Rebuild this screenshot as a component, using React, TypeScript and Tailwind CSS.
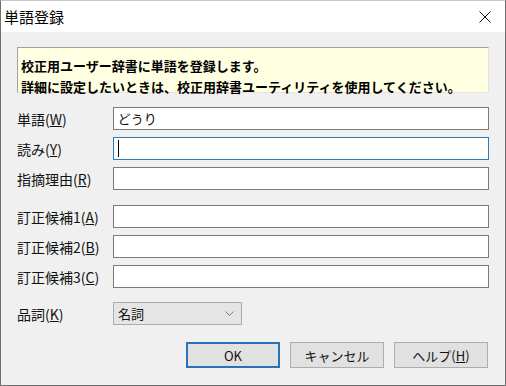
import React from 'react'

const font = 'font-["Noto_Sans_CJK_JP","Noto_Sans",sans-serif]'

function Field({ label, k, value, focused }: { label: string; k: string; value?: string; focused?: boolean }) {
  return (
    <div className="flex items-center h-[23px]">
      <div className="w-[96px] text-[14px] leading-none text-[#111]">
        {label}(<span className="underline">{k}</span>)
      </div>
      <div
        className={`relative flex items-center w-[377px] h-[23px] bg-white border ${focused ? 'border-[#2b7bb9]' : 'border-[#7a7a7a]'} pl-[4px] text-[13px] leading-none text-[#111]`}
      >
        {value}
        {focused && <div className="w-px h-[17px] bg-black" />}
      </div>
    </div>
  )
}

function Btn({ children, primary }: { children: React.ReactNode; primary?: boolean }) {
  return (
    <div
      className={`w-[94px] h-[26px] flex items-center justify-center bg-[#e1e1e1] text-[13px] leading-none text-[#111] ${primary ? 'border-2 border-[#2a72b5]' : 'border border-[#adadad]'}`}
    >
      {children}
    </div>
  )
}

export default function App() {
  return (
    <div className={`w-[506px] h-[386px] border border-[#707070] border-t-[#c8c8c8] bg-[#f0f0f0] flex flex-col ${font}`}>
      {/* title bar */}
      <div className="h-[31px] bg-white flex items-center justify-between pl-[3px] pr-[14px]">
        <span className="text-[15px] leading-none text-black">単語登録</span>
        <svg width="12" height="12" viewBox="0 0 12 12" className="text-[#1a1a1a]">
          <path d="M0.5 0.5 L11.5 11.5 M11.5 0.5 L0.5 11.5" stroke="currentColor" strokeWidth="1" fill="none" />
        </svg>
      </div>

      <div className="flex flex-col px-[16px]">
        {/* info */}
        <div className="mt-[15px] w-[472px] h-[46px] bg-[#ffffe1] border border-[#a0a0a0] border-r-[#e3e3e3] border-b-[#e3e3e3] pl-[3px] pt-[7px] text-[13px] font-bold leading-[21px] text-black">
          <div>校正用ユーザー辞書に単語を登録します。</div>
          <div>詳細に設定したいときは、校正用辞書ユーティリティを使用してください。</div>
        </div>

        <div className="mt-[14px] flex flex-col gap-[7px]">
          <Field label="単語" k="W" value="どうり" />
          <Field label="読み" k="Y" focused />
          <Field label="指摘理由" k="R" />
        </div>

        <div className="mt-[15px] flex flex-col gap-[7px]">
          <Field label="訂正候補1" k="A" />
          <Field label="訂正候補2" k="B" />
          <Field label="訂正候補3" k="C" />
        </div>

        <div className="mt-[14px] flex items-center h-[23px]">
          <div className="w-[96px] text-[14px] leading-none text-[#111]">
            品詞(<span className="underline">K</span>)
          </div>
          <div className="w-[129px] h-[23px] flex items-center justify-between bg-[#e5e5e5] border border-[#acacac] pl-[4px] pr-[7px] text-[13px] leading-none text-[#111]">
            名詞
            <svg width="9" height="5" viewBox="0 0 9 5">
              <path d="M0.5 0.5 L4.5 4.5 L8.5 0.5" stroke="#7a7a7a" strokeWidth="1" fill="none" />
            </svg>
          </div>
        </div>

        <div className="mt-[17px] flex justify-end gap-[10px] pr-[1px]">
          <Btn primary>OK</Btn>
          <Btn>キャンセル</Btn>
          <Btn>
            ヘルプ(<span className="underline">H</span>)
          </Btn>
        </div>
      </div>
    </div>
  )
}
